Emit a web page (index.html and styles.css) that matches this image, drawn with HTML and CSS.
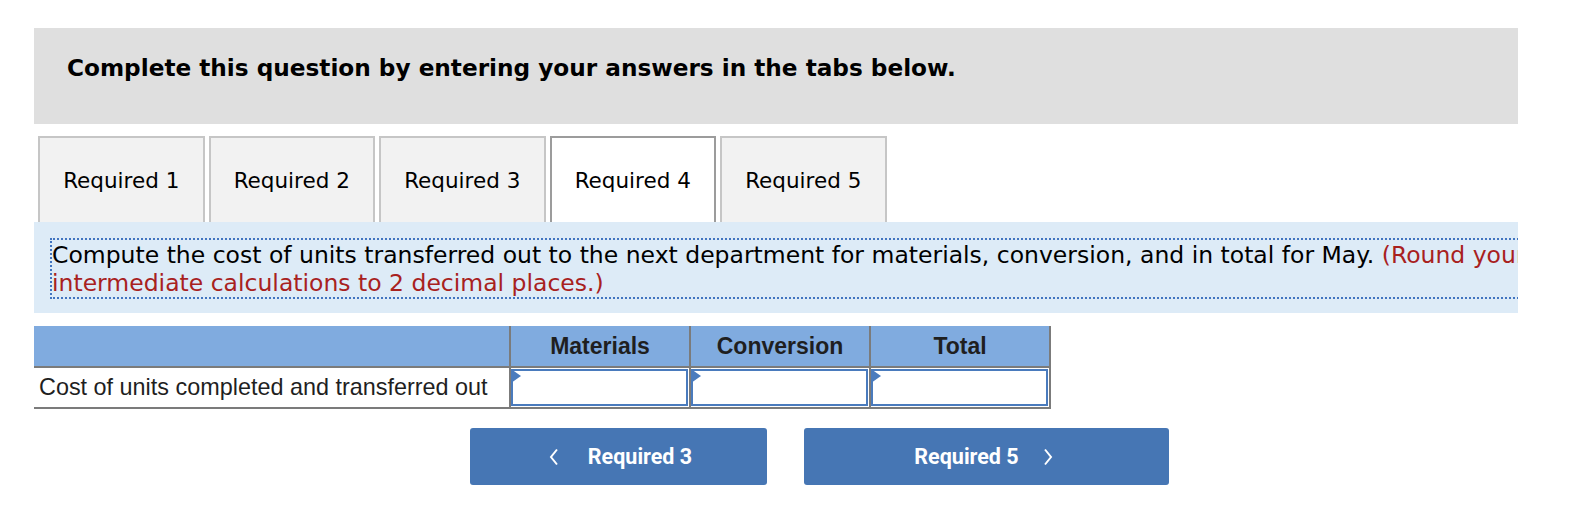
FILE: index.html
```html
<!DOCTYPE html>
<html lang="en">
<head>
<meta charset="utf-8">
<title>Required 4</title>
<link rel="stylesheet" href="styles.css">
</head>
<body>
<div class="page">
  <div class="banner">
    <h2 class="banner-title">Complete this question by entering your answers in the tabs below.</h2>
  </div>

  <div class="tabs">
    <div class="tab">Required 1</div>
    <div class="tab">Required 2</div>
    <div class="tab">Required 3</div>
    <div class="tab tab-active">Required 4</div>
    <div class="tab">Required 5</div>
  </div>

  <div class="panel">
    <div class="prompt">Compute the cost of units transferred out to the next department for materials, conversion, and in total for May. <span class="hint">(Round your intermediate calculations to 2 decimal places.)</span></div>
  </div>

  <table class="grid">
    <thead>
      <tr>
        <th class="col-label"></th>
        <th class="col-val">Materials</th>
        <th class="col-val">Conversion</th>
        <th class="col-val">Total</th>
      </tr>
    </thead>
    <tbody>
      <tr>
        <td class="row-label">Cost of units completed and transferred out</td>
        <td class="cell"><div class="field"><span class="marker"></span></div></td>
        <td class="cell"><div class="field"><span class="marker"></span></div></td>
        <td class="cell"><div class="field"><span class="marker"></span></div></td>
      </tr>
    </tbody>
  </table>

  <div class="nav">
    <div class="nav-btn nav-prev">
      <svg class="chev" width="10" height="18" viewBox="0 0 10 18"><path d="M8 1.5 L2 9 L8 16.5" fill="none" stroke="#ffffff" stroke-width="2"/></svg>
      <span class="nav-text">Required 3</span>
    </div>
    <div class="nav-btn nav-next">
      <span class="nav-text">Required 5</span>
      <svg class="chev" width="10" height="18" viewBox="0 0 10 18"><path d="M2 1.5 L8 9 L2 16.5" fill="none" stroke="#ffffff" stroke-width="2"/></svg>
    </div>
  </div>
</div>
</body>
</html>
```

FILE: styles.css
```css
html, body {
  margin: 0;
  padding: 0;
  background: #ffffff;
}

.page {
  padding: 28px 0 0 34px;
  width: 1484px;
  font-family: "DejaVu Sans", Verdana, sans-serif;
  color: #000000;
}

.banner {
  height: 96px;
  box-sizing: border-box;
  background: #dfdfdf;
  padding: 26px 0 0 33px;
}

.banner-title {
  margin: 0;
  font-size: 23.2px;
  font-weight: bold;
  line-height: normal;
}

.tabs {
  display: flex;
  margin-top: 12px;
  padding-left: 4px;
  gap: 4px;
}

.tab {
  width: 166.5px;
  height: 86px;
  box-sizing: border-box;
  border: 2px solid #c6c6c6;
  border-bottom: none;
  background: #f2f2f2;
  display: flex;
  align-items: center;
  justify-content: center;
  font-size: 21.5px;
}

.tab-active {
  background: #ffffff;
  border-color: #9c9c9c;
}

.panel {
  background: #ddebf7;
  padding: 16px 0 14px 16px;
  overflow: hidden;
}

.prompt {
  width: 1520px;
  border: 2px dotted #4174c0;
  padding-top: 2px;
  font-size: 23.5px;
  line-height: 27.5px;
}

.hint {
  color: #a8211e;
}

.grid {
  margin-top: 13px;
  border-collapse: collapse;
  font-family: "Liberation Sans", Arial, sans-serif;
  color: #1f1f1f;
}

.grid th {
  background: #80abdf;
  height: 40px;
  padding: 0;
  font-size: 23px;
  font-weight: bold;
  border-right: 2px solid #7b7b7b;
  border-bottom: 2px solid #7b7b7b;
}

.col-label {
  width: 475px;
}

.col-val {
  width: 178px;
}

.row-label {
  font-size: 23.4px;
  text-align: left;
  padding: 0 0 0 5px;
  height: 39px;
  border-right: 2px solid #7b7b7b;
  border-bottom: 2px solid #7b7b7b;
  white-space: nowrap;
}

.cell {
  padding: 1px 1px 1px 0;
  border-right: 2px solid #7b7b7b;
  border-bottom: 2px solid #7b7b7b;
}

.field {
  position: relative;
  height: 37px;
  box-sizing: border-box;
  border: 2px solid #4a7bbd;
  background: #ffffff;
}

.marker {
  position: absolute;
  left: -2px;
  top: -2px;
  width: 0;
  height: 0;
  border-top: 7px solid transparent;
  border-bottom: 7px solid transparent;
  border-left: 10px solid #4a7bbd;
}

.nav {
  display: flex;
  margin-top: 19px;
  padding-left: 436px;
  gap: 37px;
}

.nav-btn {
  height: 57px;
  box-sizing: border-box;
  border-radius: 3px;
  background: #4676b4;
  color: #ffffff;
  display: flex;
  align-items: center;
  justify-content: center;
  font-family: Roboto, "Liberation Sans", sans-serif;
  font-weight: bold;
  font-size: 21.5px;
}

.nav-prev {
  width: 297px;
  gap: 29px;
  padding-left: 4px;
}

.nav-next {
  width: 365px;
  gap: 24px;
  padding-right: 6px;
}

.chev {
  display: block;
}
```
